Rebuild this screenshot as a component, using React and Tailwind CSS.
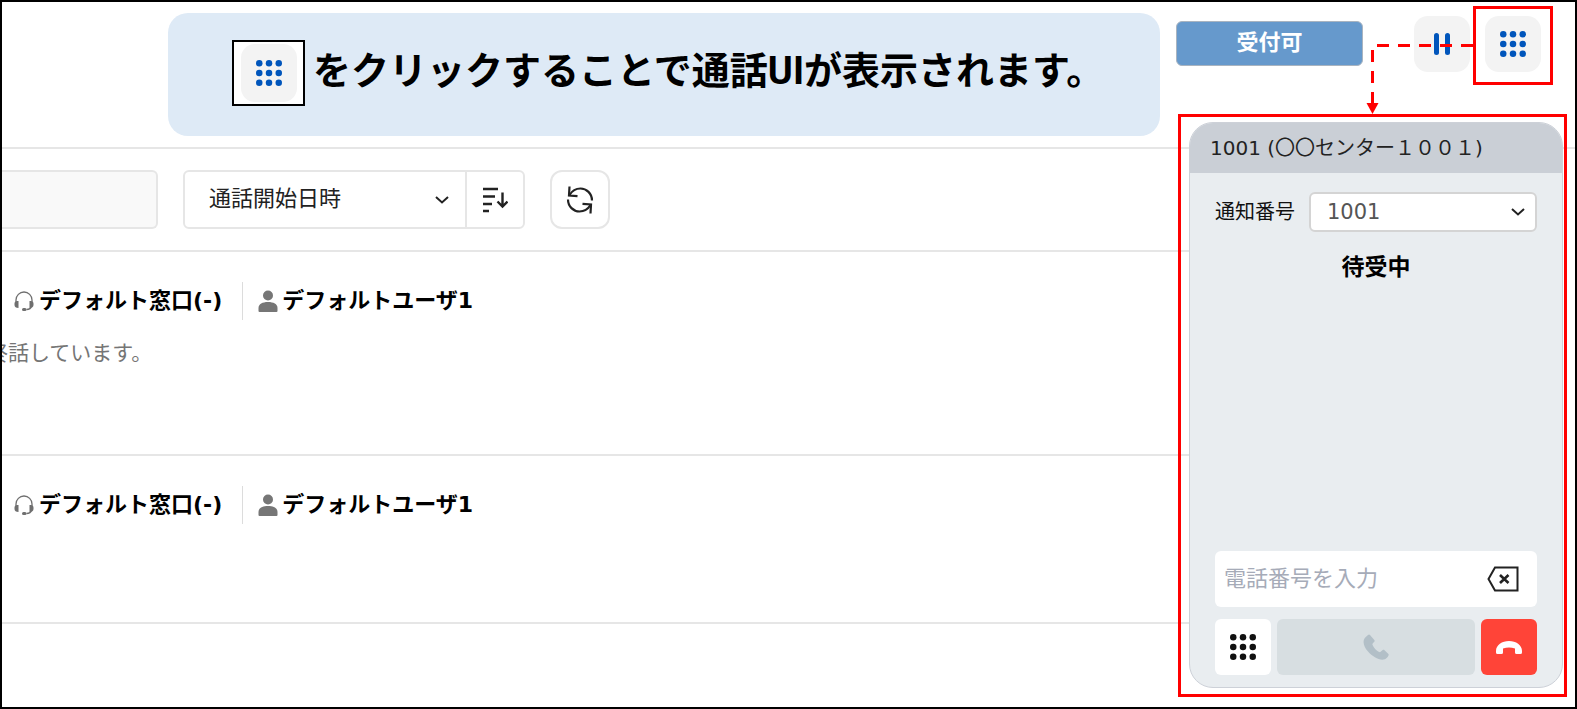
import { useState } from 'react';

const DOTS = [3, 12, 21];

function KeypadIcon({ className }) {
  return (
    <svg viewBox="0 0 24 24" fill="currentColor" className={className} aria-hidden="true">
      {DOTS.map((cy) => DOTS.map((cx) => <circle key={`${cx}-${cy}`} cx={cx} cy={cy} r="3" />))}
    </svg>
  );
}

function ChevronIcon({ className }) {
  return (
    <svg viewBox="0 0 14 8" fill="none" stroke="currentColor" strokeWidth="2" className={className} aria-hidden="true">
      <path d="M1 1l6 5.500L13 1" />
    </svg>
  );
}

function SortIcon() {
  return (
    <svg viewBox="0 0 26 26" fill="none" stroke="currentColor" strokeWidth="2.400" className="h-[26px] w-[26px]" aria-hidden="true">
      <path d="M1 2h15M1 9.500h12M1 17h9M1 24h6" />
      <path d="M20.500 5.500v14M15.500 14.500l5 5 5-5" />
    </svg>
  );
}

function RefreshIcon() {
  return (
    <svg viewBox="0 0 28 28" fill="none" stroke="currentColor" strokeWidth="2.200" className="h-7 w-7" aria-hidden="true">
      <path d="M26 14.500C26 7.500 20.500 2.500 14.500 2.500c-4.500 0-8.500 2.500-11 6.500" />
      <path d="M3.500.500L3 9.500l8.500.700" />
      <path d="M2 13.500c0 7 5.500 12 11.500 12 4.500 0 8.500-2.500 11-6.500" />
      <path d="M24.500 27.500l.500-9-8.500-.700" />
    </svg>
  );
}

function HeadsetIcon() {
  return (
    <svg viewBox="0 0 20 20" className="h-5 w-5 shrink-0 text-[#6f6f6f]" fill="none" stroke="currentColor" aria-hidden="true">
      <path d="M2 12V9a8 8 0 0 1 16 0v3" strokeWidth="1.300" />
      <path d="M17.500 15c-.500 2.500-2.500 3.500-5 3.500" strokeWidth="1.300" />
      <path d="M.500 12.500c0-2 1.500-2.500 4-2.500v7c-2.500 0-4-1-4-3zM19.500 12.500c0-2-1.500-2.500-4-2.500v7c2.500 0 4-1 4-3z" fill="currentColor" stroke="none" />
      <rect x="8" y="17" width="4.500" height="3" rx="1.500" fill="currentColor" stroke="none" />
    </svg>
  );
}

function UserIcon() {
  return (
    <svg viewBox="0 0 20 22" className="h-[22px] w-5 shrink-0 text-[#767676]" fill="currentColor" aria-hidden="true">
      <circle cx="10" cy="5.500" r="5" />
      <path d="M.500 21v-3c0-4 4-6 9.500-6s9.500 2 9.500 6v3q0 1-1 1h-17q-1 0-1-1z" />
    </svg>
  );
}

function BackspaceIcon() {
  return (
    <svg viewBox="0 0 32 26" fill="none" stroke="currentColor" strokeWidth="2" className="h-[26px] w-8" aria-hidden="true">
      <path d="M8 1.500h22.500v23H8L1.500 13z" />
      <path d="M13 9l8.500 8M21.500 9L13 17" strokeWidth="2.600" />
    </svg>
  );
}

function PhoneIcon() {
  return (
    <svg viewBox="0 0 26 26" fill="currentColor" className="h-[26px] w-[26px]" aria-hidden="true">
      <path d="M5 1L2.500 3.200C-1 6.500.500 12.500 5 17.500s11 9 16 8c2-.500 3.500-2 4.500-4 .300-.700.200-1.200-.300-1.700l-3.700-3.600c-.600-.600-1.200-.600-1.800-.100l-2.700 2.200c-3.500-1.300-6.800-5-7.700-8.300L11.200 7.800c.600-.500.600-1.200.100-1.800L7 1C6.400.300 5.700.300 5 1z" />
    </svg>
  );
}

function HangUpIcon() {
  return (
    <svg viewBox="0 0 26 13" fill="currentColor" className="h-[13px] w-[26px]" aria-hidden="true">
      <path d="M0 11.500V10C0 4 6 0 13 0s13 4 13 10v1.500q0 1.500-1.500 1.500h-4q-1.500 0-1.500-1.500V7.500C15 6 11 6 7 7.500v4Q7 13 5.500 13h-4Q0 13 0 11.500z" />
    </svg>
  );
}

function DashedArrow() {
  return (
    <svg
      viewBox="0 0 107 71"
      className="pointer-events-none absolute top-[37px] right-full z-20 h-[71px] w-[107px]"
      aria-hidden="true"
    >
      <path d="M107 2.500H6.500V61" fill="none" stroke="#ff0000" strokeWidth="3" strokeDasharray="12 9" />
      <path d="M.500 60h12l-6 11z" fill="#ff0000" />
    </svg>
  );
}

function CallRow({ desk, user, message, className }) {
  return (
    <article className={`border-b-2 border-[#e6e6e6] pt-[30px] pl-3 ${className}`}>
      <div className="flex h-[38px] items-center text-[22px] leading-[30px] font-bold text-black">
        <HeadsetIcon />
        <span className="ml-[5px]">{desk}</span>
        <span className="mr-[15px] ml-5 h-full w-px bg-[#dcdcdc]" />
        <UserIcon />
        <span className="ml-1">{user}</span>
      </div>
      {message && (
        <p className="mt-[18px] -ml-[27px] text-[21px] leading-[30px] text-[#757575]">{message}</p>
      )}
    </article>
  );
}

function CallPanel() {
  const [phone, setPhone] = useState('');

  return (
    <aside className="absolute top-[112px] right-2 z-10 flex h-[583px] w-[389px] border-[3px] border-[#ff0000] pt-[5px] pr-px pb-[6px] pl-2">
      <div className="flex min-w-0 flex-1 flex-col overflow-hidden rounded-3xl border border-[#cdd1d8] bg-[#e9edf0]">
        <h2 className="bg-[#cacfd6] px-5 py-[10px] text-[20px] leading-[30px] text-[#222]">
          1001 (〇〇センター１００１)
        </h2>

        <div className="flex flex-1 flex-col px-[25px] pt-[19px] pb-3">
          <div className="flex items-center justify-between">
            <label htmlFor="caller-id" className="text-[20px] leading-[30px] text-[#111]">
              通知番号
            </label>
            <div className="grid w-[228px] items-center">
              <select
                id="caller-id"
                className="col-start-1 row-start-1 h-10 appearance-none rounded-md border-2 border-[#d4d4d4] bg-white pt-[2px] pl-4 text-[21px] text-[#555]"
              >
                <option>1001</option>
              </select>
              <ChevronIcon className="pointer-events-none col-start-1 row-start-1 mr-3 h-2 w-[14px] justify-self-end text-[#222]" />
            </div>
          </div>

          <p className="mt-5 text-center text-[23px] leading-[30px] font-bold text-black">待受中</p>

          <div className="mt-auto flex h-14 items-center rounded-md bg-white pr-[18px]">
            <input
              type="tel"
              aria-label="電話番号"
              placeholder="電話番号を入力"
              value={phone}
              onChange={(e) => setPhone(e.target.value)}
              className="h-full min-w-0 flex-1 bg-transparent pb-[2px] pl-[9px] text-[22px] outline-none placeholder:text-[#a6abb8]"
            />
            <button type="button" aria-label="一文字削除" onClick={() => setPhone((prev) => prev.slice(0, -1))} className="text-[#222]">
              <BackspaceIcon />
            </button>
          </div>

          <div className="mt-3 flex gap-[6px]">
            <button type="button" aria-label="ダイヤルパッド" className="flex h-14 w-14 items-center justify-center rounded-md bg-white text-[#111]">
              <KeypadIcon className="h-[26px] w-[26px]" />
            </button>
            <button type="button" aria-label="発信" className="flex h-14 flex-1 items-center justify-center rounded-md bg-[#d7dee1] text-[#b2bfc7]">
              <PhoneIcon />
            </button>
            <button type="button" aria-label="終話" className="flex h-14 w-14 items-center justify-center rounded-md bg-[#ff4438] text-white">
              <HangUpIcon />
            </button>
          </div>
        </div>
      </div>
    </aside>
  );
}

export default function App() {
  return (
    <div className="relative min-h-screen overflow-hidden border-2 border-black bg-white font-['DejaVu_Sans','Noto_Sans_CJK_JP',sans-serif]">
      <header className="flex h-[147px] items-start border-b-2 border-[#e6e6e6] pr-[22px]">
        <div className="mt-[11px] ml-[166px] flex h-[123px] flex-1 items-center rounded-[20px] bg-[#deeaf6] pb-[3px] pl-16">
          <span className="flex h-[66px] w-[73px] shrink-0 items-center justify-center border-2 border-black bg-white">
            <span className="flex h-[58px] w-14 items-center justify-center rounded-[14px] bg-[#f3f3f3] text-[#0055bb]">
              <KeypadIcon className="h-[26px] w-[26px]" />
            </span>
          </span>
          <p className="ml-2 pb-1 font-['Roboto','Noto_Sans_CJK_JP',sans-serif] text-[38px] leading-[54px] font-bold whitespace-nowrap text-black">
            をクリックすることで通話UIが表示されます。
          </p>
        </div>

        <button type="button" className="mt-[19px] ml-4 h-[45px] w-[187px] rounded-md border border-[#a9b4c0] bg-[#6699cc] pb-[2px] text-[22px] leading-[30px] font-bold text-white">
          受付可
        </button>
        <button type="button" aria-label="一時停止" className="mt-[14px] ml-[51px] flex h-14 w-14 items-center justify-center gap-[6px] rounded-[14px] bg-[#f3f3f3]">
          <span className="h-[22px] w-[5px] rounded-full bg-[#0055bb]" />
          <span className="h-[22px] w-[5px] rounded-full bg-[#0055bb]" />
        </button>
        <div className="relative mt-1 ml-[3px]">
          <div className="flex h-[79px] w-20 items-start justify-center border-[3px] border-[#ff0000] pt-[7px]">
            <button type="button" aria-label="通話UIを表示" className="flex h-14 w-14 items-center justify-center rounded-[14px] bg-[#f3f3f3] text-[#0055bb]">
              <KeypadIcon className="h-[26px] w-[26px]" />
            </button>
          </div>
          <DashedArrow />
        </div>
      </header>

      <main className="mr-[380px]">
        <div className="flex h-[103px] items-center border-b-2 border-[#e6e6e6]">
          <input
            type="text"
            aria-label="検索"
            className="h-[59px] w-[156px] rounded-r-md border-2 border-l-0 border-[#e6e6e6] bg-[#f9f9f9] px-3 outline-none"
          />
          <div className="ml-[25px] flex h-[59px] rounded-md border-2 border-[#e6e6e6] text-[#222]">
            <div className="grid w-[280px] items-center">
              <select aria-label="並び順" className="col-start-1 row-start-1 h-full appearance-none bg-transparent pb-[2px] pl-6 text-[22px] text-[#222]">
                <option>通話開始日時</option>
              </select>
              <ChevronIcon className="pointer-events-none col-start-1 row-start-1 mr-4 h-2 w-[14px] justify-self-end" />
            </div>
            <button type="button" aria-label="降順" className="flex w-[58px] items-center justify-center border-l-2 border-[#e6e6e6]">
              <SortIcon />
            </button>
          </div>
          <button type="button" aria-label="更新" className="ml-[25px] flex h-[59px] w-[60px] items-center justify-center rounded-xl border-2 border-[#e6e6e6] text-[#222]">
            <RefreshIcon />
          </button>
        </div>

        <CallRow desk="デフォルト窓口(-)" user="デフォルトユーザ1" message="終話しています。" className="pb-[86px]" />
        <CallRow desk="デフォルト窓口(-)" user="デフォルトユーザ1" className="pb-[98px]" />
      </main>

      <CallPanel />
    </div>
  );
}
